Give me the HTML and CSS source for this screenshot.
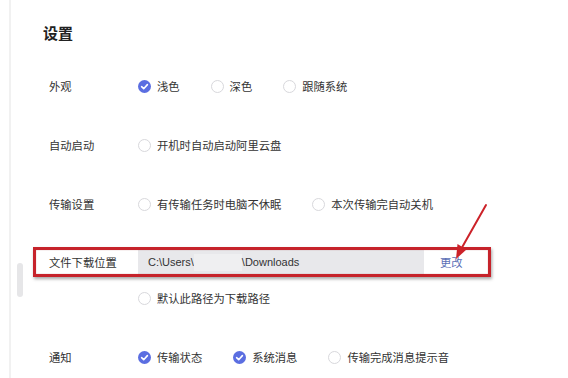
FILE: index.html
```html
<!DOCTYPE html>
<html lang="zh-CN">
<head>
<meta charset="utf-8">
<title>设置</title>
<link rel="stylesheet" href="styles.css">
</head>
<body>
<div class="panel">
  <h1 class="title">设置</h1>

  <div class="row first">
    <div class="label">外观</div>
    <div class="options">
      <span class="opt"><span class="radio checked"><svg viewBox="0 0 13 13"><circle cx="6.5" cy="6.5" r="6.5" fill="#5b6ee1"/><path d="M3.6 6.7 L5.7 8.7 L9.4 4.6" fill="none" stroke="#fff" stroke-width="1.6" stroke-linecap="round" stroke-linejoin="round"/></svg></span>浅色</span>
      <span class="opt"><span class="radio"></span>深色</span>
      <span class="opt"><span class="radio"></span>跟随系统</span>
    </div>
  </div>

  <div class="row">
    <div class="label">自动启动</div>
    <div class="options">
      <span class="opt"><span class="radio"></span>开机时自动启动阿里云盘</span>
    </div>
  </div>

  <div class="row">
    <div class="label">传输设置</div>
    <div class="options">
      <span class="opt"><span class="radio"></span>有传输任务时电脑不休眠</span>
      <span class="opt"><span class="radio"></span>本次传输完自动关机</span>
    </div>
  </div>

  <div class="row path-row">
    <div class="label">文件下载位置</div>
    <div class="path-box"><span>C:\Users\</span><span class="blur"></span><span>\Downloads</span></div>
    <a class="change">更改</a>
  </div>

  <div class="row tight">
    <div class="label"></div>
    <div class="options">
      <span class="opt"><span class="radio"></span>默认此路径为下载路径</span>
    </div>
  </div>

  <div class="row">
    <div class="label">通知</div>
    <div class="options">
      <span class="opt"><span class="radio checked"><svg viewBox="0 0 13 13"><circle cx="6.5" cy="6.5" r="6.5" fill="#5b6ee1"/><path d="M3.6 6.7 L5.7 8.7 L9.4 4.6" fill="none" stroke="#fff" stroke-width="1.6" stroke-linecap="round" stroke-linejoin="round"/></svg></span>传输状态</span>
      <span class="opt"><span class="radio checked"><svg viewBox="0 0 13 13"><circle cx="6.5" cy="6.5" r="6.5" fill="#5b6ee1"/><path d="M3.6 6.7 L5.7 8.7 L9.4 4.6" fill="none" stroke="#fff" stroke-width="1.6" stroke-linecap="round" stroke-linejoin="round"/></svg></span>系统消息</span>
      <span class="opt"><span class="radio"></span>传输完成消息提示音</span>
    </div>
  </div>

  <div class="scrollbar"></div>
  <div class="highlight"></div>
  <svg class="arrow" viewBox="0 0 60 70" width="60" height="70">
    <line x1="46" y1="4" x2="20" y2="50" stroke="#cc2229" stroke-width="2" stroke-linecap="round"/>
    <polygon points="16,58 17.5,43 26.5,48.5" fill="#cc2229"/>
  </svg>
</div>
</body>
</html>
```

FILE: styles.css
```css
html, body {
  margin: 0;
  padding: 0;
  background: #ffffff;
}

body {
  font-family: "Noto Sans CJK SC", "Noto Sans", sans-serif;
  font-size: 11.3px;
  color: #333333;
  overflow: hidden;
}

.panel {
  position: relative;
  margin-left: 9px;
  border-left: 2px solid #f1f1f1;
  height: 378px;
  padding: 23px 0 0 32px;
  box-sizing: border-box;
}

.title {
  margin: 0;
  font-size: 15px;
  line-height: 20px;
  font-weight: bold;
  color: #222222;
}

.row {
  display: flex;
  align-items: center;
  height: 24px;
  padding-left: 6px;
  margin-top: 35px;
}

.row.first {
  margin-top: 31px;
}

.row.path-row {
  margin-top: 34px;
}

.row.tight {
  margin-top: 12px;
}

.label {
  width: 89px;
  flex: none;
  white-space: nowrap;
}

.options {
  display: flex;
  align-items: center;
  gap: 31px;
}

.opt {
  display: flex;
  align-items: center;
  white-space: nowrap;
}

.radio {
  width: 13px;
  height: 13px;
  box-sizing: border-box;
  border: 1px solid #d8d8dc;
  border-radius: 50%;
  background: #fff;
  margin-right: 6px;
  flex: none;
}

.radio.checked {
  border: none;
  background: none;
}

.radio svg {
  display: block;
  width: 13px;
  height: 13px;
}

.path-box {
  display: flex;
  align-items: center;
  width: 286px;
  height: 24px;
  box-sizing: border-box;
  padding-left: 10px;
  background: #e8e8eb;
  font-family: "Liberation Sans", "Noto Sans CJK SC", sans-serif;
  font-size: 11px;
  color: #333;
}

.blur {
  display: inline-block;
  width: 48px;
  height: 17px;
  background: #efeff1;
}

.change {
  margin-left: 16px;
  color: #5b6fb6;
  cursor: pointer;
}

.scrollbar {
  position: absolute;
  left: 6px;
  top: 263px;
  width: 6px;
  height: 34px;
  border-radius: 3px;
  background: #e6e6e8;
}

.highlight {
  position: absolute;
  left: 22px;
  top: 247px;
  width: 458px;
  height: 30px;
  box-sizing: border-box;
  border: 3px solid #c6232b;
  box-shadow: 1px 2px 3px rgba(0, 0, 0, 0.35), inset 0 0 1px rgba(120, 0, 0, 0.6);
}

.arrow {
  position: absolute;
  left: 429px;
  top: 201px;
  overflow: visible;
}
```
